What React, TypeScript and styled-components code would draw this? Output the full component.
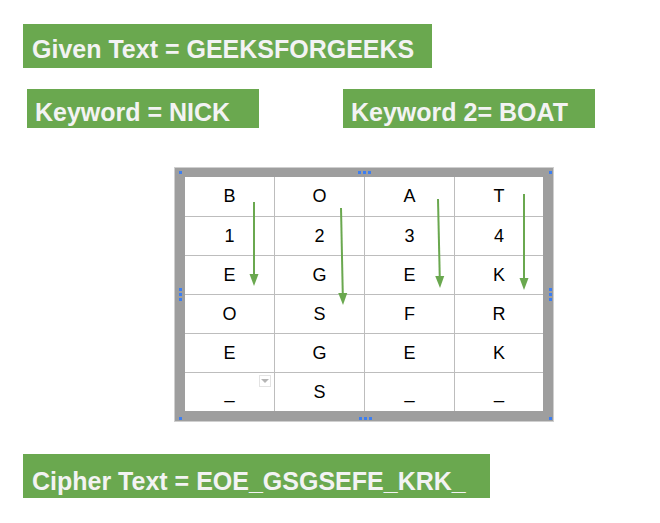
import React, { FC } from "react";
import styled, { createGlobalStyle } from "styled-components";

const GlobalStyle = createGlobalStyle`
  body {
    margin: 0;
    background: #ffffff;
    font-family: "Liberation Sans", Arial, sans-serif;
  }
`;

const GREEN = "#6aa84f";

const grid = [
  ["B", "O", "A", "T"],
  ["1", "2", "3", "4"],
  ["E", "G", "E", "K"],
  ["O", "S", "F", "R"],
  ["E", "G", "E", "K"],
  ["_", "S", "_", "_"],
];

// arrows, relative to the frame's outer corner
const arrows = [
  { x1: 80, y1: 35, x2: 80, y2: 119 },
  { x1: 167, y1: 41, x2: 169, y2: 138 },
  { x1: 264, y1: 32, x2: 266, y2: 121 },
  { x1: 350, y1: 27, x2: 350, y2: 123 },
];

const handles = [
  { x: 4, y: 3 },
  { x: 183, y: 3 },
  { x: 188, y: 3 },
  { x: 193, y: 3 },
  { x: 374, y: 3 },
  { x: 4, y: 120 },
  { x: 4, y: 125 },
  { x: 4, y: 130 },
  { x: 374, y: 120 },
  { x: 374, y: 125 },
  { x: 374, y: 130 },
  { x: 4, y: 249 },
  { x: 184, y: 249 },
  { x: 189, y: 249 },
  { x: 194, y: 249 },
  { x: 374, y: 249 },
];

const Arrow: FC<{ x1: number; y1: number; x2: number; y2: number }> = ({
  x1,
  y1,
  x2,
  y2,
}) => {
  const head = 12;
  const half = 4.5;
  const dx = x2 - x1;
  const dy = y2 - y1;
  const len = Math.sqrt(dx * dx + dy * dy);
  const ux = dx / len;
  const uy = dy / len;
  const bx = x2 - ux * head;
  const by = y2 - uy * head;
  const pts = `${x2},${y2} ${bx - uy * half},${by + ux * half} ${bx + uy * half},${by - ux * half}`;
  return (
    <g>
      <line x1={x1} y1={y1} x2={bx} y2={by} stroke={GREEN} strokeWidth={2} />
      <polygon points={pts} fill={GREEN} />
    </g>
  );
};

export default function App() {
  return (
    <Page>
      <GlobalStyle />
      <Label $width={409} $height={44} $padTop={13} $padLeft={9}>
        Given Text = GEEKSFORGEEKS
      </Label>
      <KeywordRow>
        <Label $width={232} $height={39} $padTop={11} $padLeft={8} $left={27}>
          Keyword = NICK
        </Label>
        <Label $width={252} $height={39} $padTop={11} $padLeft={8} $left={84}>
          Keyword 2= BOAT
        </Label>
      </KeywordRow>
      <Frame>
        <Cells>
          {grid.map((row, r) =>
            row.map((v, c) => (
              <Cell key={`${r}-${c}`}>
                {v}
                {r === 5 && c === 0 ? (
                  <DropButton>
                    <Caret />
                  </DropButton>
                ) : null}
              </Cell>
            ))
          )}
        </Cells>
        <ArrowLayer width={380} height={255}>
          {arrows.map((a, i) => (
            <Arrow key={i} {...a} />
          ))}
        </ArrowLayer>
        {handles.map((h, i) => (
          <Handle key={i} style={{ left: h.x, top: h.y }} />
        ))}
      </Frame>
      <Label $width={467} $height={44} $padTop={15} $padLeft={9} $top={32}>
        Cipher Text = EOE_GSGSEFE_KRK_
      </Label>
    </Page>
  );
}

const Page = styled.div`
  display: flex;
  flex-direction: column;
  align-items: flex-start;
  padding: 24px 0 0 23px;
`;

const Label = styled.div<{
  $width: number;
  $height: number;
  $padTop: number;
  $padLeft: number;
  $left?: number;
  $top?: number;
}>`
  box-sizing: border-box;
  width: ${(p) => p.$width}px;
  height: ${(p) => p.$height}px;
  margin-left: ${(p) => p.$left ?? 0}px;
  margin-top: ${(p) => p.$top ?? 0}px;
  padding: ${(p) => p.$padTop}px 0 0 ${(p) => p.$padLeft}px;
  background: ${GREEN};
  color: #f3f3f3;
  font-size: 25px;
  font-weight: bold;
  line-height: 25px;
  white-space: nowrap;
`;

const KeywordRow = styled.div`
  display: flex;
  margin-top: 21px;
  margin-left: -23px;
`;

const Frame = styled.div`
  position: relative;
  box-sizing: border-box;
  width: 380px;
  height: 255px;
  margin-top: 39px;
  margin-left: 151px;
  border: 1px solid #cfcfcf;
  background: #9e9e9e;
  padding: 9px 10px;
`;

const Cells = styled.div`
  display: grid;
  grid-template-columns: 89px 89px 89px 88px;
  grid-template-rows: 39px 38px 38px 38px 38px 38px;
  gap: 1px;
  width: 358px;
  height: 234px;
  background: #bdbdbd;
  border: 0;
`;

const Cell = styled.div`
  position: relative;
  display: flex;
  align-items: center;
  justify-content: center;
  background: #ffffff;
  color: #000000;
  font-size: 18px;
`;

const DropButton = styled.div`
  position: absolute;
  top: 2px;
  right: 3px;
  width: 12px;
  height: 12px;
  box-sizing: border-box;
  border: 1px solid #e3e3e3;
  display: flex;
  align-items: center;
  justify-content: center;
`;

const Caret = styled.div`
  width: 0;
  height: 0;
  border-left: 4px solid transparent;
  border-right: 4px solid transparent;
  border-top: 4px solid #b5b5b5;
`;

const ArrowLayer = styled.svg`
  position: absolute;
  left: -1px;
  top: -1px;
  pointer-events: none;
`;

const Handle = styled.div`
  position: absolute;
  width: 3px;
  height: 3px;
  background: #3d7ef0;
`;
